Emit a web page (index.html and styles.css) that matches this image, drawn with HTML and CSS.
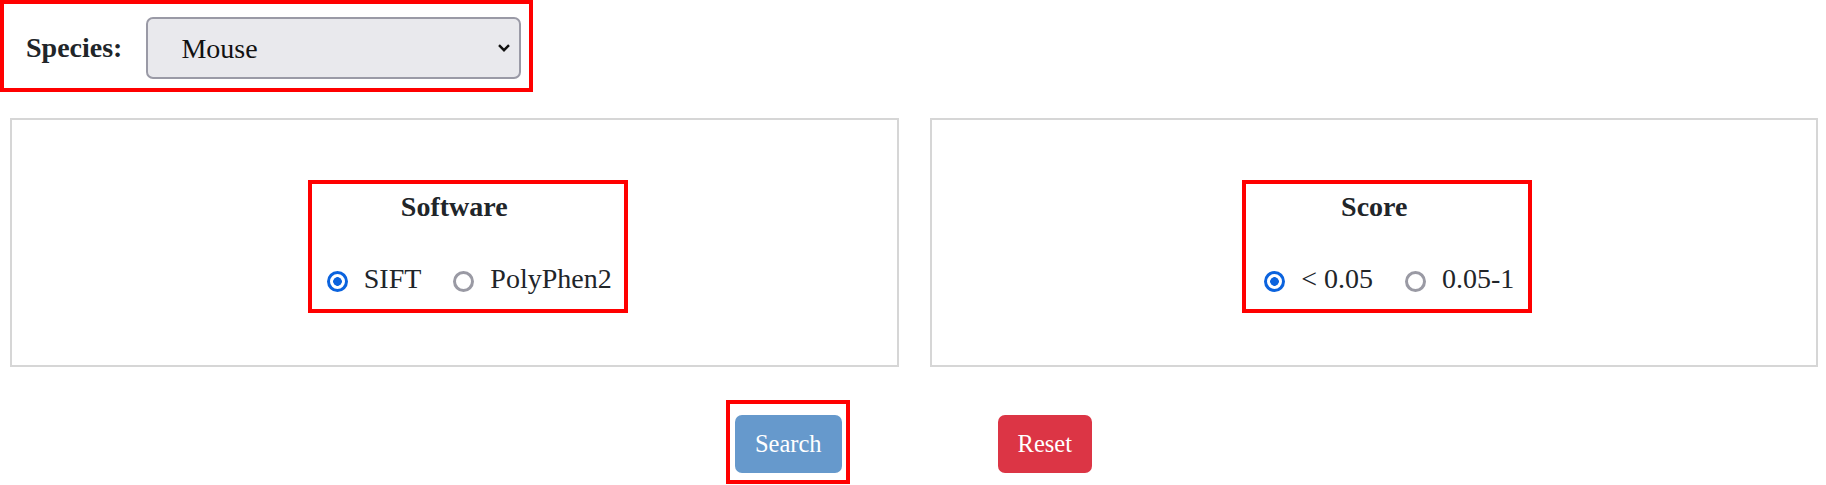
FILE: index.html
```html
<!DOCTYPE html>
<html lang="en">
  <head>
    <meta charset="UTF-8" />
    <meta name="viewport" content="width=device-width, initial-scale=1.0" />
    <title>Variant Search</title>
    <link rel="stylesheet" href="styles.css">
  </head>

  <body>
    <!-- Species picker -->
    <div class="species-box">
      <label for="species" class="species-label">Species:</label>
      <div class="select-wrap">
        <select id="species" class="species-select">
          <option value="mouse">Mouse</option>
          <option value="human">Human</option>
          <option value="rat">Rat</option>
        </select>
        <svg class="chevron" width="12" height="8" viewBox="0 0 12 8">
          <path d="M1 1.2 L6 6.2 L11 1.2" fill="none" stroke="#111" stroke-width="2.4" />
        </svg>
      </div>
    </div>

    <!-- Filter panels -->
    <div class="panel-row">
      <div class="panel">
        <div class="group">
          <div class="group-title">Software</div>
          <div class="radio-row">
            <label class="option">
              <input type="radio" name="software" value="sift" checked />
              <span>SIFT</span>
            </label>
            <label class="option">
              <input type="radio" name="software" value="polyphen2" />
              <span>PolyPhen2</span>
            </label>
          </div>
        </div>
      </div>

      <div class="panel">
        <div class="group group-score">
          <div class="group-title">Score</div>
          <div class="radio-row">
            <label class="option">
              <input type="radio" name="score" value="low" checked />
              <span>&lt; 0.05</span>
            </label>
            <label class="option">
              <input type="radio" name="score" value="high" />
              <span>0.05-1</span>
            </label>
          </div>
        </div>
      </div>
    </div>

    <!-- Actions -->
    <div class="button-row">
      <div class="search-mark">
        <button class="btn btn-search">Search</button>
      </div>
      <button class="btn btn-reset">Reset</button>
    </div>
  </body>
</html>
```

FILE: styles.css
```css
body {
  margin: 0;
  font-family: "Liberation Serif", "Times New Roman", serif;
  font-size: 28px;
  color: #212529;
  background: #fff;
}

/* Species picker */
.species-box {
  display: flex;
  width: fit-content;
  align-items: center;
  gap: 24px;
  border: 4px solid #ff0000;
  padding: 13px 8px 9px 22px;
}

.species-label {
  font-weight: bold;
}

.select-wrap {
  position: relative;
  display: flex;
}

.species-select {
  appearance: none;
  -webkit-appearance: none;
  box-sizing: border-box;
  width: 375px;
  height: 62px;
  padding: 0 40px 0 33px;
  font-family: inherit;
  font-size: 28px;
  color: #111;
  background-color: #e9e9ed;
  border: 2px solid #9a9aa6;
  border-radius: 7px;
}

.chevron {
  position: absolute;
  right: 11px;
  top: 27px;
  pointer-events: none;
}

/* Filter panels */
.panel-row {
  display: flex;
  gap: 31px;
  margin-top: 26px;
  padding: 0 8px 0 10px;
}

.panel {
  flex: 1;
  box-sizing: border-box;
  height: 249px;
  border: 2px solid #d6d6d6;
  display: flex;
  justify-content: center;
  align-items: center;
  padding: 8px 0 0 27px;
}

.group {
  border: 4px solid #ff0000;
  padding: 7px 12px 14px 15px;
}

.group-score {
  padding-left: 18px;
  padding-right: 14px;
}

.group-title {
  font-weight: bold;
  text-align: center;
  padding-right: 30px;
  margin-bottom: 40px;
}

.radio-row {
  display: flex;
  gap: 32px;
}

.option {
  display: flex;
  align-items: center;
  gap: 16px;
}

.option input {
  appearance: none;
  -webkit-appearance: none;
  box-sizing: border-box;
  width: 21px;
  height: 21px;
  margin: 5px 0 0 0;
  border: 3px solid #9a9aa4;
  border-radius: 50%;
  background: #fff;
}

.option input:checked {
  border-color: #0b63de;
  background: radial-gradient(circle, #0b63de 0 4px, #fff 4.6px);
}

/* Actions */
.button-row {
  display: flex;
  justify-content: center;
  align-items: flex-start;
  gap: 148px;
  margin-top: 33px;
  padding-right: 8px;
}

/* red marker round the search button */
.search-mark {
  display: flex;
  border: 4px solid #ff0000;
  padding: 11px 4px 7px 5px;
}

.btn {
  box-sizing: border-box;
  height: 58px;
  font-family: inherit;
  font-size: 24.5px;
  line-height: 1.5;
  padding: 0 20px;
  color: #fff;
  border: none;
  border-radius: 7px;
  cursor: pointer;
}

.btn-search {
  background-color: #6699cc;
}

.btn-reset {
  margin-top: 15px;
  background-color: #dc3545;
}
```
